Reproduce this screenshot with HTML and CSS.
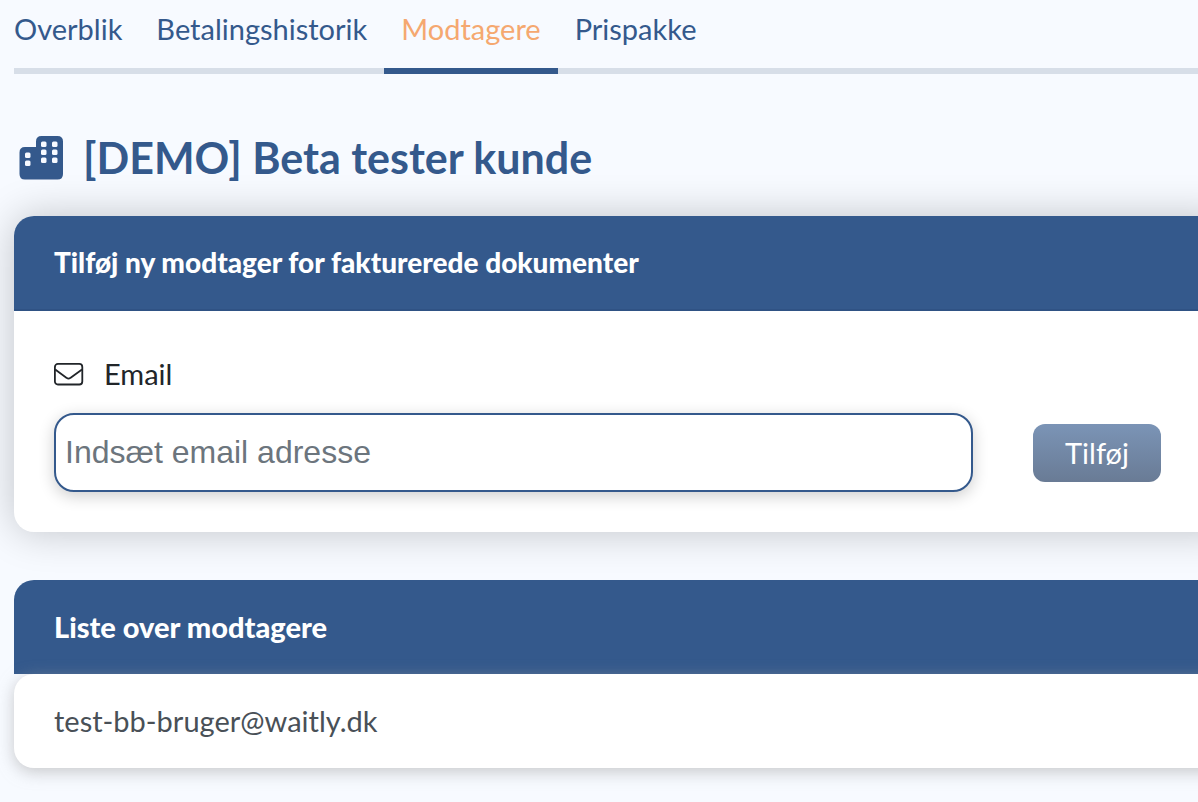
FILE: index.html
```html
<!DOCTYPE html>
<html lang="da">
<head>
<meta charset="utf-8">
<title>Modtagere</title>
<link rel="stylesheet" href="styles.css">
</head>
<body>
<nav class="tabs">
  <a class="tab" href="#overblik">Overblik</a>
  <a class="tab" href="#betalingshistorik">Betalingshistorik</a>
  <a class="tab tab-active" href="#modtagere" aria-current="page">Modtagere</a>
  <a class="tab" href="#prispakke">Prispakke</a>
</nav>
<main>
  <h1 class="title">
    <svg class="title-icon" viewBox="0 0 44 44" aria-hidden="true">
      <path fill="currentColor" fill-rule="evenodd" d="M6 11H17V5.500Q17 0 22.500 0H38.500Q44 0 44 5.500V38Q44 43.500 38.500 43.500H6Q0.500 43.500 0.500 38V16.500Q0.500 11 6 11Z"/>
      <g fill="#f7faff">
        <rect x="22" y="5.500" width="5.500" height="5.500" rx="1.500"/><rect x="33" y="5.500" width="5.500" height="5.500" rx="1.500"/>
        <rect x="22" y="13.500" width="5.500" height="5.500" rx="1.500"/><rect x="33" y="13.500" width="5.500" height="5.500" rx="1.500"/>
        <rect x="22" y="21.500" width="5.500" height="5.500" rx="1.500"/><rect x="33" y="21.500" width="5.500" height="5.500" rx="1.500"/>
        <rect x="6" y="16.500" width="5.500" height="5.500" rx="1.500"/><rect x="6" y="24.500" width="5.500" height="5.500" rx="1.500"/>
      </g>
    </svg>
    [DEMO] Beta tester kunde
  </h1>
  <section class="card">
    <h2 class="card-head card-head-line">Tilføj ny modtager for fakturerede dokumenter</h2>
    <form class="card-body">
      <label class="field-label" for="email">
        <svg class="mail-icon" viewBox="0 0 30 24" fill="none" stroke="currentColor" stroke-width="1.800" stroke-linejoin="round" aria-hidden="true">
          <rect x="0.900" y="1.900" width="27.400" height="20.600" rx="3"/>
          <path d="M1.200 7.600L12.700 15.900Q14.500 17.300 16.300 15.900L28 7.600"/>
        </svg>
        Email
      </label>
      <div class="field-row">
        <input class="field" id="email" type="email" placeholder="Indsæt email adresse">
        <button class="button" type="submit">Tilføj</button>
      </div>
    </form>
  </section>
  <section class="list">
    <h2 class="card-head list-head">Liste over modtagere</h2>
    <ul class="list-body">
      <li>test-bb-bruger@waitly.dk</li>
    </ul>
  </section>
</main>
</body>
</html>
```
FILE: styles.css
```css
* { box-sizing: border-box; }
html { overflow-x: hidden; }
body {
  margin: 0;
  padding-left: 14px;
  background: #f7faff;
  color: #212529;
  font: 29px/36px Lato, sans-serif;
}
.tabs {
  display: flex;
  padding-top: 11px;
  box-shadow: inset 0 -6px #d7dee8;
}
.tab {
  padding: 0 17px 21px;
  border-bottom: 6px solid transparent;
  color: #34598c;
  text-decoration: none;
}
.tab:first-child { padding-left: 0; }
.tab-active { color: #f5a870; border-color: #34598c; }
.title {
  display: flex;
  align-items: center;
  gap: 20px;
  margin: 56px 0 30px;
  padding-left: 5px;
  color: #34598c;
  font-size: 43px;
  line-height: 56px;
}
.title-icon { width: 44px; height: 44px; flex: none; }
.card, .list { margin-right: -40px; }
.card {
  background: #fff;
  border-radius: 20px;
  box-shadow: 0 0 40px rgba(0, 0, 0, 0.22);
}
.card-head {
  margin: 0;
  padding: 29px 40px;
  border-radius: 20px 20px 0 0;
  background: #34598c;
  color: #fff;
  font-size: 28px;
  font-weight: 900;
  line-height: 36px;
}
.card-head-line { padding: 28px 40px 29px; border-bottom: 2px solid #2f5284; }
.list-head { font-size: 29px; }
.card-body { padding: 45px 77px 40px 40px; }
.field-label { display: flex; align-items: center; gap: 20px; }
.mail-icon { width: 30px; height: 24px; }
.field-row { display: flex; align-items: center; gap: 60px; margin-top: 21px; }
.field {
  flex: 1;
  min-width: 0;
  height: 79px;
  padding: 0 9px;
  border: 2px solid #34598c;
  border-radius: 20px;
  background: #fff;
  box-shadow: 0 4px 16px rgba(0, 0, 0, 0.2);
  font: 32px "Liberation Sans", sans-serif;
}
.field::placeholder { color: #6c757d; opacity: 1; }
.button {
  padding: 11px 32px;
  border: 0;
  border-radius: 12px;
  background: linear-gradient(#7b94b6, #697b95);
  color: #fff;
  font: 29px/36px Lato, sans-serif;
}
.list { margin-top: 48px; margin-bottom: 32px; }
.list-body {
  margin: 0;
  padding: 29px 40px;
  list-style: none;
  border-radius: 20px;
  background: #fff;
  color: #495057;
  box-shadow: 0 4px 16px rgba(160, 160, 160, 0.55);
}
```
